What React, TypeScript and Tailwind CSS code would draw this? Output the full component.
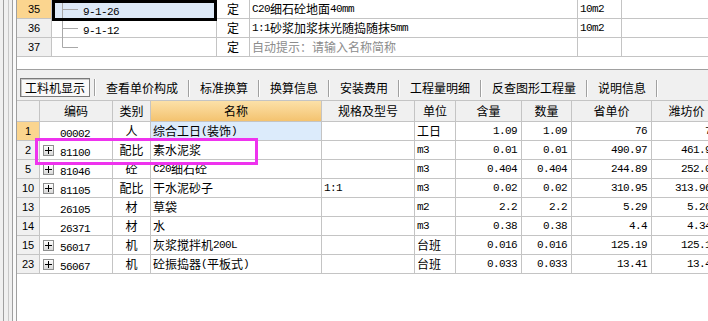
import clsx from "clsx";

const cjk = "font-['Noto_Sans_CJK_SC',sans-serif] text-[12px]";
const mono = "font-['Liberation_Mono',monospace] text-[11px] tracking-[-0.6px]";
const line = "border-[#c4c4c4]";

// splits ascii runs from CJK runs so each gets its own font
function Mixed({ text }: { text: string }) {
  const parts = text.split(/([\x20-\x7e]+)/).filter(Boolean);

  return (
    <>
      {parts.map((part, i) =>
        /^[\x20-\x7e]+$/.test(part) ? (
          <span className={mono} key={i}>
            {part}
          </span>
        ) : (
          <span className={cjk} key={i}>
            {part}
          </span>
        ),
      )}
    </>
  );
}

const topRows = [
  { no: "35", code: "9-1-26", name: "C20细石砼地面40mm", unit: "10m2", selected: true },
  { no: "36", code: "9-1-12", name: "1:1砂浆加浆抹光随捣随抹5mm", unit: "10m2" },
  { no: "37", code: "", name: "自动提示：请输入名称简称", unit: "", hint: true },
];

const tabs = ["查看单价构成", "标准换算", "换算信息", "安装费用", "工程量明细", "反查图形工程量", "说明信息"];

const rows = [
  { no: "1", plus: false, code: "00002", cat: "人", name: "综合工日(装饰)", spec: "", unit: "工日", qty: "1.09", amt: "1.09", price: "76", wf: "76" },
  { no: "2", plus: true, code: "81100", cat: "配比", name: "素水泥浆", spec: "", unit: "m3", qty: "0.01", amt: "0.01", price: "490.97", wf: "461.93" },
  { no: "5", plus: true, code: "81046", cat: "砼", name: "C20细石砼", spec: "", unit: "m3", qty: "0.404", amt: "0.404", price: "244.89", wf: "252.05" },
  { no: "10", plus: true, code: "81105", cat: "配比", name: "干水泥砂子", spec: "1:1", unit: "m3", qty: "0.02", amt: "0.02", price: "310.95", wf: "313.965" },
  { no: "13", plus: false, code: "26105", cat: "材", name: "草袋", spec: "", unit: "m2", qty: "2.2", amt: "2.2", price: "5.29", wf: "5.265" },
  { no: "14", plus: false, code: "26371", cat: "材", name: "水", spec: "", unit: "m3", qty: "0.38", amt: "0.38", price: "4.4", wf: "4.345" },
  { no: "15", plus: true, code: "56017", cat: "机", name: "灰浆搅拌机200L", spec: "", unit: "台班", qty: "0.016", amt: "0.016", price: "125.19", wf: "125.19" },
  { no: "23", plus: true, code: "56067", cat: "机", name: "砼振捣器(平板式)", spec: "", unit: "台班", qty: "0.033", amt: "0.033", price: "13.41", wf: "13.41" },
];

const headers = [
  { label: "", w: "w-[23px]" },
  { label: "编码", w: "w-[73px]" },
  { label: "类别", w: "w-[38px]" },
  { label: "名称", w: "w-[171px]", active: true },
  { label: "规格及型号", w: "w-[93px]" },
  { label: "单位", w: "w-[41px]" },
  { label: "含量", w: "w-[66px]" },
  { label: "数量", w: "w-[50px]" },
  { label: "省单价", w: "w-[80px]" },
  { label: "潍坊价", w: "w-[70px]" },
];

function PlusBox() {
  return (
    <span className="flex h-[11px] w-[11px] shrink-0 items-center justify-center border border-[#8e8f8f] bg-linear-to-b from-white to-[#d8d8d8]">
      <svg height="7" viewBox="0 0 7 7" width="7">
        <path d="M0 3.5h7M3.5 0v7" stroke="#000" strokeWidth="1" />
      </svg>
    </span>
  );
}

function TreeLine({ last }: { last?: boolean }) {
  return (
    <svg className="shrink-0" height="19" viewBox="0 0 26 19" width="26">
      <path d={last ? "M10.5 0v9.5H26" : "M10.5 0v19M10.5 9.5H26"} fill="none" stroke="#a8a8a8" strokeWidth="1" />
    </svg>
  );
}

function TopPanel() {
  return (
    <div className="h-[70px] shrink-0 border-b border-[#a0a0a0] bg-white">
      {topRows.map((row) => (
        <div className="flex h-[19px]" key={row.no}>
          <div
            className={clsx(
              "flex w-[35px] shrink-0 items-center justify-center border-r border-b font-['Liberation_Sans',sans-serif] text-[11px]",
              line,
              row.selected ? "bg-[#fbd58f]" : "bg-[#f0f0f0]",
            )}
          >
            {row.no}
          </div>
          <div
            className={clsx(
              "flex w-[165px] shrink-0 items-center border-r border-b",
              line,
              row.selected && "bg-[#dde9f7]",
            )}
          >
            <TreeLine last={row.hint} />
            <span className="ml-[5px]">
              <Mixed text={row.code} />
            </span>
          </div>
          <div className={clsx("flex w-[33px] shrink-0 items-center justify-center border-r border-b", line, cjk)}>
            定
          </div>
          <div
            className={clsx(
              "flex w-[328px] shrink-0 items-center border-r border-b pl-[2px] whitespace-nowrap",
              line,
              row.hint && "text-[#8c8c8c]",
            )}
          >
            <Mixed text={row.name} />
          </div>
          <div className={clsx("flex w-[44px] shrink-0 items-center border-r border-b pl-[2px]", line)}>
            <Mixed text={row.unit} />
          </div>
          <div className={clsx("flex-1 border-b", line)} />
        </div>
      ))}
    </div>
  );
}

function TabBar() {
  return (
    <div className={clsx("flex h-[30px] shrink-0 items-start pt-[8px] pl-[3px]", cjk)}>
      <div className="flex h-[19px] w-[70px] items-center justify-center border border-[#7a7a7a] bg-[#f9f9f9] shadow-[inset_1px_1px_0_#c8c8c8]">
        工料机显示
      </div>
      <div className="ml-[4px] mt-[1px] h-[17px] w-[2px] border-l border-r border-l-[#a0a0a0] border-r-white" />
      {tabs.map((tab) => (
        <div className="flex items-center" key={tab}>
          <span className="flex h-[19px] items-center px-[10px]">{tab}</span>
          <div className="mt-[1px] h-[17px] w-[2px] border-l border-r border-l-[#a0a0a0] border-r-white" />
        </div>
      ))}
    </div>
  );
}

function BottomGrid() {
  return (
    <div className="flex-1 bg-white">
      <div className={clsx("flex h-[22px] border-b border-t bg-[#f0f0f0]", line, cjk)}>
        {headers.map((h) => (
          <div
            className={clsx(
              "flex shrink-0 items-center justify-center border-r",
              line,
              h.w,
              h.active && "bg-linear-to-b from-[#fce1a8] to-[#f4c36f]",
            )}
            key={h.w + h.label}
          >
            {h.label}
          </div>
        ))}
      </div>

      {rows.map((row, index) => {
        const first = index === 0;
        const cell = clsx("flex h-full shrink-0 items-center overflow-hidden whitespace-nowrap border-r", line);
        const num = clsx(cell, "justify-end pr-[4px]");

        return (
          <div className={clsx("flex h-[19px] border-b", line)} key={row.no}>
            <div
              className={clsx(
                cell,
                "w-[23px] justify-center font-['Liberation_Sans',sans-serif] text-[11px]",
                first ? "bg-[#fbd58f]" : "bg-[#f0f0f0]",
              )}
            >
              {row.no}
            </div>
            <div className={clsx(cell, "w-[73px] pl-[3px]")}>
              {row.plus ? <PlusBox /> : <span className="w-[11px] shrink-0" />}
              <span className="ml-[6px]">
                <Mixed text={row.code} />
              </span>
            </div>
            <div className={clsx(cell, "w-[38px] justify-center")}>
              <Mixed text={row.cat} />
            </div>
            <div className={clsx(cell, "w-[171px] pl-[2px]", first && "bg-[#dcebfb]")}>
              <Mixed text={row.name} />
            </div>
            <div className={clsx(cell, "w-[93px] pl-[2px]")}>
              <Mixed text={row.spec} />
            </div>
            <div className={clsx(cell, "w-[41px] pl-[2px]")}>
              <Mixed text={row.unit} />
            </div>
            <div className={clsx(num, "w-[66px]")}>
              <Mixed text={row.qty} />
            </div>
            <div className={clsx(num, "w-[50px]")}>
              <Mixed text={row.amt} />
            </div>
            <div className={clsx(num, "w-[80px]")}>
              <Mixed text={row.price} />
            </div>
            <div className={clsx(num, "w-[70px]")}>
              <Mixed text={row.wf} />
            </div>
          </div>
        );
      })}
    </div>
  );
}

export default function App() {
  return (
    <div className="relative flex h-[321px] w-[708px] overflow-hidden bg-[#f0f0f0] text-black">
      {/* splitter strip on the left edge */}
      <div className="flex h-full w-[17px] shrink-0">
        <div className="w-[3px] bg-[#f0f0f0]" />
        <div className="w-px bg-[#a0a0a0]" />
        <div className="w-[4px] bg-[#f0f0f0]" />
        <div className="w-px bg-[#c8c8c8]" />
        <div className="w-[3px] bg-[#f0f0f0]" />
        <div className="w-px bg-[#a0a0a0]" />
        <div className="w-[3px] bg-[#fafafa]" />
        <div className="w-px bg-[#a0a0a0]" />
      </div>

      <div className="flex w-[760px] shrink-0 flex-col">
        <TopPanel />
        <TabBar />
        <BottomGrid />
      </div>

      {/* current cell frame in the top grid */}
      <div className="absolute top-0 left-[52px] h-[21px] w-[165px] border-[3px] border-black" />
      {/* magenta highlight drawn over the material list */}
      <div className="absolute top-[138px] left-[35px] h-[27px] w-[223px] border-[3px] border-[#ee33ee]" />
    </div>
  );
}
